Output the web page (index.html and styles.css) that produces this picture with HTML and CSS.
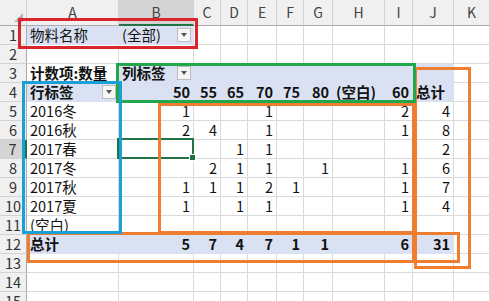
FILE: index.html
```html
<!DOCTYPE html>
<html lang="zh-CN">
<head>
<meta charset="utf-8">
<title>数据透视表</title>
<link rel="stylesheet" href="styles.css">
</head>
<body>
<div class="sheet">
  <div class="grid">
    <div class="h corner"></div><div class="h">A</div><div class="h hs">B</div><div class="h">C</div><div class="h">D</div><div class="h">E</div><div class="h">F</div><div class="h">G</div><div class="h">H</div><div class="h">I</div><div class="h">J</div><div class="h">K</div>

    <div class="rn">1</div><div class="f">物料名称</div><div class="f fl"><span>(全部)</span><span class="dd"></span></div><div></div><div></div><div></div><div></div><div></div><div></div><div></div><div></div><div></div>

    <div class="rn">2</div><div></div><div></div><div></div><div></div><div></div><div></div><div></div><div></div><div></div><div></div><div></div>

    <div class="rn">3</div><div class="b">计数项:数量</div><div class="f b fl"><span>列标签</span><span class="dd"></span></div><div class="f"></div><div class="f"></div><div class="f"></div><div class="f"></div><div class="f"></div><div class="f"></div><div class="f"></div><div class="f"></div><div></div>

    <div class="rn">4</div><div class="f b fl"><span>行标签</span><span class="dd"></span></div><div class="f b n">50</div><div class="f b n">55</div><div class="f b n">65</div><div class="f b n">70</div><div class="f b n">75</div><div class="f b n">80</div><div class="f b">(空白)</div><div class="f b n">60</div><div class="f b">总计</div><div></div>

    <div class="rn">5</div><div>2016冬</div><div class="n">1</div><div></div><div></div><div class="n">1</div><div></div><div></div><div></div><div class="n">2</div><div class="n">4</div><div></div>

    <div class="rn">6</div><div>2016秋</div><div class="n">2</div><div class="n">4</div><div></div><div class="n">1</div><div></div><div></div><div></div><div class="n">1</div><div class="n">8</div><div></div>

    <div class="rn rs">7</div><div>2017春</div><div></div><div></div><div class="n">1</div><div class="n">1</div><div></div><div></div><div></div><div></div><div class="n">2</div><div></div>

    <div class="rn">8</div><div>2017冬</div><div></div><div class="n">2</div><div class="n">1</div><div class="n">1</div><div></div><div class="n">1</div><div></div><div class="n">1</div><div class="n">6</div><div></div>

    <div class="rn">9</div><div>2017秋</div><div class="n">1</div><div class="n">1</div><div class="n">1</div><div class="n">2</div><div class="n">1</div><div></div><div></div><div class="n">1</div><div class="n">7</div><div></div>

    <div class="rn">10</div><div>2017夏</div><div class="n">1</div><div></div><div class="n">1</div><div class="n">1</div><div></div><div></div><div></div><div class="n">1</div><div class="n">4</div><div></div>

    <div class="rn">11</div><div>(空白)</div><div></div><div></div><div></div><div></div><div></div><div></div><div></div><div></div><div></div><div></div>

    <div class="rn">12</div><div class="f b">总计</div><div class="f b n">5</div><div class="f b n">7</div><div class="f b n">4</div><div class="f b n">7</div><div class="f b n">1</div><div class="f b n">1</div><div class="f b"></div><div class="f b n">6</div><div class="f b n">31</div><div></div>

    <div class="rn">13</div><div></div><div></div><div></div><div></div><div></div><div></div><div></div><div></div><div></div><div></div><div></div>

    <div class="rn">14</div><div></div><div></div><div></div><div></div><div></div><div></div><div></div><div></div><div></div><div></div><div></div>

    <div class="rn">15</div><div></div><div></div><div></div><div></div><div></div><div></div><div></div><div></div><div></div><div></div><div></div>
  </div>

  <div class="sel"><span class="handle"></span></div>

  <div class="box red"></div>
  <div class="box o-vals"></div>
  <div class="box o-total"></div>
  <div class="box o-col"></div>
  <div class="box o-grand"></div>
  <div class="box green"></div>
  <div class="box blue"></div>
</div>
</body>
</html>
```

FILE: styles.css
```css
html, body {
  margin: 0;
  padding: 0;
  background: #ffffff;
}
body {
  width: 490px;
  height: 301px;
  overflow: hidden;
  font-family: "Noto Sans CJK SC", "Microsoft YaHei", sans-serif;
}
.sheet {
  position: relative;
  width: 490px;
  height: 301px;
  overflow: hidden;
}
.grid {
  display: grid;
  grid-template-columns: 27px 92px 75px 27px 27px 29px 27px 29px 52px 28px 41px 36px;
  grid-template-rows: 26px repeat(15, 19px);
}
.grid > div {
  box-sizing: border-box;
  border-right: 1px solid #dadada;
  border-bottom: 1px solid #dadada;
  font-size: 14.5px;
  line-height: 18px;
  padding: 0 3px;
  white-space: nowrap;
  color: #111;
}
.grid > .h {
  background: #f0f0f0;
  border-right-color: #d2d2d2;
  border-bottom-color: #ababab;
  text-align: center;
  color: #444;
  font-size: 14px;
  line-height: 25px;
  padding: 0;
}
.grid > .hs {
  background: #d4d4d4;
  border-bottom: 2px solid #217346;
}
.grid > .corner {
  position: relative;
}
.corner::after {
  content: "";
  position: absolute;
  right: 3px;
  bottom: 3px;
  border-left: 9px solid transparent;
  border-bottom: 9px solid #b4b4b4;
}
.grid > .rn {
  background: #f0f0f0;
  border-right-color: #ababab;
  border-bottom-color: #d2d2d2;
  text-align: center;
  color: #333;
  padding: 0;
}
.grid > .rs {
  background: #d4d4d4;
  border-right: 2px solid #217346;
}
.grid > .f {
  background: #d9e1f2;
  border-color: #d9e1f2;
}
.grid > .b {
  font-weight: 700;
}
.grid > .n {
  text-align: right;
}
.grid > .fl {
  display: flex;
  align-items: center;
  justify-content: space-between;
  padding-right: 2px;
}
.dd {
  width: 14px;
  height: 14px;
  box-sizing: border-box;
  border: 1px solid #bdbdbd;
  background: #f6f6f6;
  display: flex;
  align-items: center;
  justify-content: center;
}
.dd::after {
  content: "";
  border-left: 3.5px solid transparent;
  border-right: 3.5px solid transparent;
  border-top: 4px solid #555;
}

.sel {
  position: absolute;
  left: 117px;
  top: 138px;
  width: 77px;
  height: 21px;
  box-sizing: border-box;
  border: 2px solid #217346;
}
.handle {
  position: absolute;
  right: -4px;
  bottom: -4px;
  width: 5px;
  height: 5px;
  background: #217346;
  border: 1px solid #fff;
}

.box {
  position: absolute;
  box-sizing: border-box;
  border: 3px solid #ed7d31;
}
.red {
  left: 18px;
  top: 18px;
  width: 180px;
  height: 31px;
  border-color: #d9262c;
}
.green {
  left: 116px;
  top: 63px;
  width: 300px;
  height: 40px;
  border-color: #22a84a;
}
.blue {
  left: 22px;
  top: 81px;
  width: 100px;
  height: 153px;
  border-color: #1a9fd8;
}
.o-vals {
  left: 158px;
  top: 103px;
  width: 257px;
  height: 131px;
}
.o-total {
  left: 27px;
  top: 232px;
  width: 388px;
  height: 31px;
}
.o-col {
  left: 414px;
  top: 67px;
  width: 57px;
  height: 202px;
}
.o-grand {
  left: 414px;
  top: 232px;
  width: 46px;
  height: 31px;
}
```
